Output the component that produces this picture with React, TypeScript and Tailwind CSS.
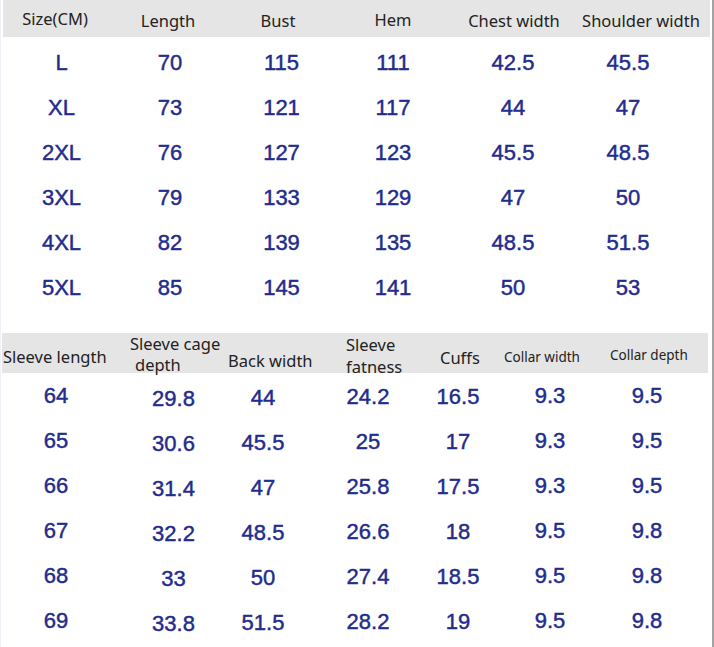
import React from 'react';

type Cell = { w: string; pad: string };

const VALUE_FONT = "font-['Liberation_Sans',Arial,sans-serif]";
const HEAD_FONT = "font-['Noto_Sans','Open_Sans',sans-serif]";

// top table: size rows
const topHead = [
    { label: 'Size(CM)', cls: 'w-[108px] pr-[4px] pt-[8px]' },
    { label: 'Length', cls: 'w-[112px] pl-[2px] pt-[10px]' },
    { label: 'Bust', cls: 'w-[113px] pr-[3px] pt-[10px]' },
    { label: 'Hem', cls: 'w-[118px] pr-[4px] pt-[9px]' },
    { label: 'Chest width', cls: 'w-[124px] pr-[4px] pt-[10px]' },
    { label: 'Shoulder width', cls: 'w-[132px] pr-[6px] pt-[10px]' },
];

const topCols: Cell[] = [
    { w: 'w-[116px]', pad: 'pl-[7px]' },
    { w: 'w-[110px]', pad: 'pr-[2px]' },
    { w: 'w-[111px]', pad: '' },
    { w: 'w-[116px]', pad: 'pr-[4px]' },
    { w: 'w-[118px]', pad: 'pl-[2px]' },
    { w: 'w-[141px]', pad: 'pr-[27px]' },
];

const topRows = [
    ['L', '70', '115', '111', '42.5', '45.5'],
    ['XL', '73', '121', '117', '44', '47'],
    ['2XL', '76', '127', '123', '45.5', '48.5'],
    ['3XL', '79', '133', '129', '47', '50'],
    ['4XL', '82', '139', '135', '48.5', '51.5'],
    ['5XL', '85', '145', '141', '50', '53'],
];

// bottom table: sleeve / collar measurements
const bottomCols: Cell[] = [
    { w: 'w-[115px]', pad: 'pr-[3px] pt-[10px]' },
    { w: 'w-[103px]', pad: 'pl-[14px] pt-[13px]' },
    { w: 'w-[98px]', pad: 'pr-[8px] pt-[12px]' },
    { w: 'w-[97px]', pad: 'pl-[7px] pt-[11px]' },
    { w: 'w-[91px]', pad: 'pr-[1px] pt-[11px]' },
    { w: 'w-[95px]', pad: 'pr-[3px] pt-[10px]' },
    { w: 'w-[113px]', pad: 'pr-[17px] pt-[10px]' },
];

const bottomRows = [
    ['64', '29.8', '44', '24.2', '16.5', '9.3', '9.5'],
    ['65', '30.6', '45.5', '25', '17', '9.3', '9.5'],
    ['66', '31.4', '47', '25.8', '17.5', '9.3', '9.5'],
    ['67', '32.2', '48.5', '26.6', '18', '9.5', '9.8'],
    ['68', '33', '50', '27.4', '18.5', '9.5', '9.8'],
    ['69', '33.8', '51.5', '28.2', '19', '9.5', '9.8'],
];

const ValueRow: React.FC<{ cols: Cell[]; values: string[]; pt?: string }> = ({
    cols,
    values,
    pt = '',
}) => (
    <div className="flex h-[45px] items-start">
        {values.map((v, i) => (
            <div
                key={i}
                className={`${cols[i].w} ${cols[i].pad} ${pt} shrink-0 whitespace-nowrap text-center text-[22px] leading-[26px] text-[#222c8c] [-webkit-text-stroke:0.45px_#222c8c] ${VALUE_FONT}`}
            >
                {v}
            </div>
        ))}
    </div>
);

export default function App() {
    return (
        <div className="flex h-[647px] w-[714px] bg-white">
            <div className="flex w-[712px] flex-col border-l border-[#f0f1f6]">
                {/* size chart header */}
                <div
                    className={`ml-[2px] flex h-[37px] w-[707px] items-start bg-[#e5e5e5] text-[16.5px] leading-[21px] text-[#222] ${HEAD_FONT}`}
                >
                    {topHead.map((h) => (
                        <div
                            key={h.label}
                            className={`${h.cls} shrink-0 whitespace-nowrap text-center`}
                        >
                            {h.label}
                        </div>
                    ))}
                </div>
                <div className="-ml-px">
                    {topRows.map((r) => (
                        <ValueRow
                            key={r[0]}
                            cols={topCols}
                            values={r}
                            pt="pt-[13px]"
                        />
                    ))}
                </div>

                {/* sleeve chart header */}
                <div
                    className={`ml-[1px] mt-[26px] flex h-[40px] w-[706px] items-start bg-[#e5e5e5] text-[16.5px] leading-[21px] text-[#222] ${HEAD_FONT}`}
                >
                    <div className="w-[126px] shrink-0 whitespace-nowrap pl-[1px] pt-[13px]">
                        Sleeve length
                    </div>
                    <div className="w-[100px] shrink-0 whitespace-nowrap pl-[2px]">
                        <div>Sleeve cage</div>
                        <div className="pl-[5px]">depth</div>
                    </div>
                    <div className="w-[116px] shrink-0 whitespace-nowrap pt-[17px]">
                        Back width
                    </div>
                    <div className="w-[92px] shrink-0 whitespace-nowrap pl-[2px] pt-[1px] leading-[22px]">
                        <div>Sleeve</div>
                        <div>fatness</div>
                    </div>
                    <div className="w-[64px] shrink-0 whitespace-nowrap pl-[4px] pt-[14px]">
                        Cuffs
                    </div>
                    <div className="w-[106px] shrink-0 whitespace-nowrap pl-[4px] pt-[14px] text-[13.5px]">
                        Collar width
                    </div>
                    <div className="w-[102px] shrink-0 whitespace-nowrap pl-[4px] pt-[12px] text-[13.5px]">
                        Collar depth
                    </div>
                </div>
                <div className="-ml-px">
                    {bottomRows.map((r) => (
                        <ValueRow key={r[0]} cols={bottomCols} values={r} />
                    ))}
                </div>
            </div>
            <div className="w-[2px] bg-[#a3a3a3]" />
        </div>
    );
}
